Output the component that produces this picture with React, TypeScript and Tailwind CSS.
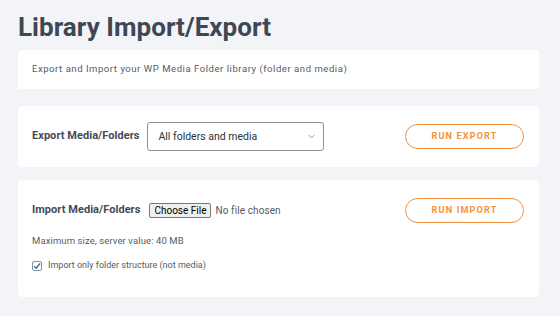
import { ChevronDown } from 'lucide-react';

function OrangeButton({ label }: { label: string }) {
  return (
    <button className="w-[119px] h-[25px] rounded-full border border-[#f4913d] text-[#f4913d] text-[9px] font-bold tracking-[1.2px] uppercase bg-white">
      {label}
    </button>
  );
}

export default function App() {
  return (
    <div
      className="w-[560px] h-[316px] overflow-hidden bg-[#f3f4f8] pl-[18px] pr-[21px] pt-[12px]"
      style={{ fontFamily: 'Roboto, "Liberation Sans", sans-serif' }}
    >
      <h1 className="text-[26px] leading-[31px] font-bold text-[#3f4754] tracking-[0.05px]">
        Library Import/Export
      </h1>

      {/* Description */}
      <div className="mt-[7px] h-[39px] bg-white rounded-[3px] flex items-center px-[14px]">
        <p className="text-[9.5px] text-[#555b66] tracking-[0.55px]">
          Export and Import your WP Media Folder library (folder and media)
        </p>
      </div>

      {/* Export */}
      <div className="mt-[17px] h-[61px] bg-white rounded-[4px] flex items-center justify-between pl-[14px] pr-[15px]">
        <div className="flex items-center gap-[8px]">
          <span className="text-[11px] font-bold text-[#444b55] tracking-[0.05px]">Export Media/Folders</span>
          <div className="w-[177px] h-[29px] border border-[#8c8f94] rounded-[3px] flex items-center justify-between pl-[10px] pr-[6px]">
            <span className="text-[10.5px] text-[#2c3338]">All folders and media</span>
            <ChevronDown size={11} strokeWidth={1.5} className="text-[#6b7280]" />
          </div>
        </div>
        <OrangeButton label="Run Export" />
      </div>

      {/* Import */}
      <div className="mt-[13px] h-[117px] bg-white rounded-[4px] flex justify-between pl-[14px] pr-[15px] pt-[18px]">
        <div className="flex flex-col">
          <div className="flex items-center h-[25px]">
            <span className="text-[11px] font-bold text-[#444b55] mr-[9px] tracking-[0.05px]">Import Media/Folders</span>
            <span className="h-[15px] px-[4px] flex items-center bg-[#efefef] border border-[#767676] rounded-[2px] text-[10px] text-black">
              Choose File
            </span>
            <span className="ml-[4px] text-[10px] text-[#555b66] tracking-[0.1px]">No file chosen</span>
          </div>
          <p className="mt-[11px] text-[9.5px] text-[#555b66] tracking-[0.1px]">Maximum size, server value: 40 MB</p>
          <label className="mt-[11px] flex items-center gap-[6px]">
            <span className="w-[10px] h-[10px] border border-[#8c8f94] rounded-[2px] flex items-center justify-center">
              <svg width="8" height="8" viewBox="0 0 8 8">
                <path d="M1.2 4.2 L3.2 6.2 L7 1.5" fill="none" stroke="#2271b1" strokeWidth="1.3" />
              </svg>
            </span>
            <span className="text-[9px] text-[#555b66]">Import only folder structure (not media)</span>
          </label>
        </div>
        <OrangeButton label="Run Import" />
      </div>
    </div>
  );
}
